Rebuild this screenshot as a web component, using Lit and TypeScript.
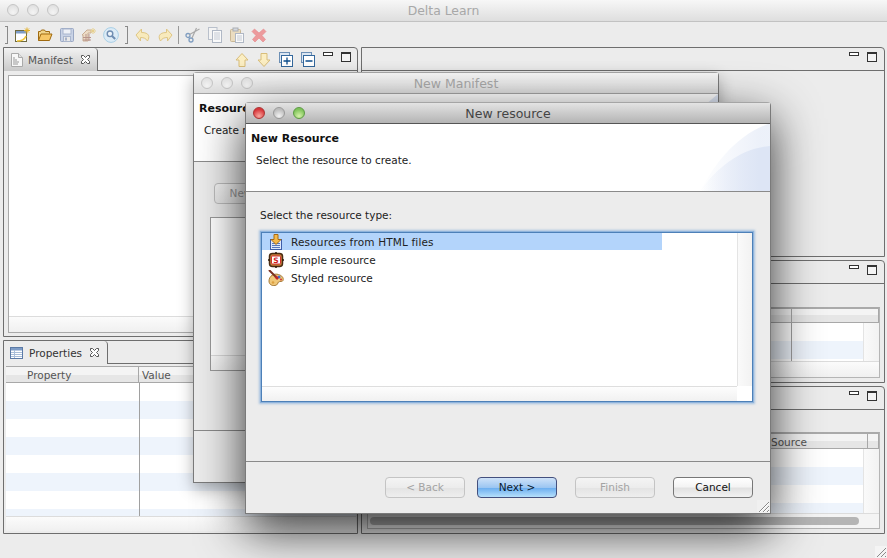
import { LitElement, html, css, svg } from "lit";
import { customElement } from "lit/decorators.js";

const viewBtns = html`<span class="vbtns"><i class="vmin"></i><i class="vmax"></i></span>`;

const ic = (body: unknown, cls = "") =>
  html`<svg class="ico ${cls}" width="16" height="16" viewBox="0 0 16 16">${body}</svg>`;

const closeX = html`<svg class="x" width="11" height="11" viewBox="0 0 11 11"><path d="M1.500 1.500h2L5.500 3.500l2-2h2v2l-2 2 2 2v2h-2l-2-2-2 2h-2v-2l2-2-2-2z" fill="#fff" stroke="#555"/></svg>`;

const tools = {
  fresh: svg`<rect x="0.500" y="3.500" width="11" height="11" fill="#fff" stroke="#6f6a3e"/><rect x="1" y="4" width="10" height="2.500" fill="#7d9cc7"/><path d="M2 14 Q9 14 11 9" stroke="#f0c53a" stroke-width="1.600" fill="none"/><path d="M12 0.500v6M9 3.500h6M10 1.500l4 4M14 1.500l-4 4" stroke="#e3b12c" stroke-width="1"/>`,
  open: svg`<path d="M1.500 13.500V4.500h2l1-1.500h3l1 1.500h4v2" fill="#f0d48a" stroke="#a06a10"/><path d="M1.500 13.500l2.500-6.500h11l-2.500 6.500z" fill="#f7c766" stroke="#a06a10"/>`,
  save: svg`<rect x="1.500" y="1.500" width="13" height="13" rx="1" fill="#c9d3e6" stroke="#9aa8c4"/><rect x="4" y="2" width="8" height="5" fill="#eef1f7" stroke="#aab6cd"/><rect x="4.500" y="9.500" width="7" height="5" fill="#e9e9e9" stroke="#aab6cd"/><rect x="6" y="10.500" width="2" height="3" fill="#a7b2c8"/>`,
  wiz: svg`<path d="M1 8l5-5h4v3l-3 0v8H2V8z" fill="#eddcc6" stroke="#c9ae94"/><path d="M2 10.500h8M5 7v7M8 7v7M2 13h8" stroke="#b9958b" fill="none"/><path d="M12 1v6M9 4h6M10.200 2.200l3.600 3.600M13.800 2.200l-3.600 3.600" stroke="#e7d08d"/>`,
  search: svg`<circle cx="8" cy="8" r="7.400" fill="#dcebf6" stroke="#a9cfe6"/><circle cx="7" cy="6.800" r="2.800" fill="#eef4fa" stroke="#6f8db2" stroke-width="1.400"/><path d="M9 9l3.200 3" stroke="#6f8db2" stroke-width="2"/>`,
  back: svg`<path d="M6.500 2L1 8l4.500 6V10.500C9 10.500 11 11.500 12.500 14C15 10 14.500 5.500 6.500 5.500z" fill="#f8eabc" stroke="#dfc684"/>`,
  fwd: svg`<path d="M9.500 2L15 8l-4.500 6V10.500C7 10.500 5 11.500 3.500 14C1 10 1.500 5.500 9.500 5.500z" fill="#f8eabc" stroke="#dfc684"/>`,
  cut: svg`<circle cx="3" cy="8.500" r="2" fill="none" stroke="#7f9dc0" stroke-width="1.300"/><circle cx="6" cy="13" r="2" fill="none" stroke="#7f9dc0" stroke-width="1.300"/><path d="M4.500 7.500L14.500 2M7 11L11.500 1" stroke="#a9a9a9" stroke-width="1.200"/>`,
  copy: svg`<rect x="1.500" y="0.500" width="8.500" height="12" fill="#f4f4f4" stroke="#b9c0cb"/><rect x="5.500" y="3.500" width="9" height="12" fill="#fafafa" stroke="#b0b8c5"/><path d="M7 6h6M7 8h6M7 10h6M7 12h6" stroke="#c4cad4"/>`,
  paste: svg`<rect x="1.500" y="2.500" width="10" height="12" rx="1" fill="#eadcc0" stroke="#c9b795"/><rect x="4" y="1" width="5" height="3" fill="#d4d8de" stroke="#a9adb4"/><rect x="6.500" y="6.500" width="8" height="9" fill="#fafafa" stroke="#b0b8c5"/><path d="M8 9h5M8 11h5M8 13h5" stroke="#c4cad4"/>`,
  del: svg`<path d="M3.500 2L8 6l4.500-4L15 4.500 11 8.500l3.500 4-2.500 2.500L8 11l-4 4-2.500-2.500L5 8.500 1 4.500z" fill="#ec9a9c" stroke="#e58689" stroke-width=".6"/>`,
};

@customElement("app-root")
export class AppRoot extends LitElement {
  static styles = css`
    :host { display: block; position: relative; width: 887px; height: 558px; overflow: hidden; background: #ececec; font-family: "DejaVu Sans", sans-serif; font-size: 10.5px; color: #222; }
    .main { display: flex; flex-direction: column; height: 558px; }
    .titlebar { height: 21px; flex: none; display: flex; align-items: center; justify-content: center; position: relative; background: linear-gradient(#f7f7f7, #dedede); border-bottom: 1px solid #c2c2c2; color: #a8a8a8; font-size: 12.4px; }
    .lights { position: absolute; left: 7px; top: 4px; display: flex; gap: 8px; }
    .light { width: 12px; height: 12px; border-radius: 50%; box-sizing: border-box; border: 1px solid #c5c5c5; background: radial-gradient(circle at 50% 75%, #f4f4f4, #dcdcdc); }
    .red { border-color: #a33; background: radial-gradient(circle at 50% 80%, #f8a9a0, #d8363a 70%); }
    .gray { border-color: #999; background: radial-gradient(circle at 50% 80%, #f3f3f3, #bdbdbd 70%); }
    .green { border-color: #5c9a43; background: radial-gradient(circle at 50% 80%, #d5f2a8, #7fc35a 70%); }
    .toolbar { height: 25px; flex: none; display: flex; align-items: center; padding-left: 5px; box-sizing: border-box; }
    .handle { flex: none; width: 3px; height: 18px; border: 1px solid #8a8a8a; border-left: 0; box-sizing: border-box; }
    .sep { flex: none; width: 1px; height: 18px; background: #999; margin: 0 6px 0 -1px; }
    .ico { flex: none; display: block; }
    .toolbar .ico { margin-right: 6px; }
    .toolbar .first { margin-left: 7px; }
    .toolbar .h2 { margin-right: 6px; }
    .work { flex: none; display: flex; gap: 3px; padding: 0 2px 0 3px; }
    .col { display: flex; flex-direction: column; gap: 3px; }
    .col.l { width: 355px; }
    .col.r { width: 524px; }
    .col.r .tabfill { padding-right: 7px; }
    .panel { box-sizing: border-box; border: 1px solid #6e6e6e; border-radius: 0 4px 0 0; display: flex; flex-direction: column; background: #ececec; overflow: hidden; }
    .phead { flex: none; height: 23px; display: flex; }
    .tab { box-sizing: border-box; height: 23px; display: flex; align-items: center; gap: 3px; padding: 0 5px; border-right: 1px solid #6e6e6e; border-radius: 0 4px 0 0; color: #333; }
    .tab .x { margin-left: 4px; flex: none; }
    .tab.inactive { background: linear-gradient(#f2f2f2, #c9c9c9); color: #555; }
    .tabfill { flex: 1; border-bottom: 1px solid #6e6e6e; display: flex; justify-content: flex-end; align-items: flex-start; gap: 8px; padding: 4px 6px 0 0; }
    .vbtns { display: flex; gap: 8px; }
    .vmin { display: block; width: 10px; height: 4px; box-sizing: border-box; border: 1px solid #333; background: #fff; }
    .vmax { display: block; width: 10px; height: 10px; box-sizing: border-box; border: 1px solid #333; border-top-width: 2px; background: #f4f4f4; }
    .vact { display: block; flex: none; }
    .pbody { flex: 1; display: flex; min-height: 0; }
    .pbody.m { padding: 4px 3px 3px 4px; }
    .pbody.p { padding: 2px 1px 2px 2px; }
    .pbody.s { padding: 23px 4px 4px 5px; }
    .box { flex: 1; display: flex; flex-direction: column; background: #fff; border: 1px solid #a9a9a9; min-width: 0; }
    .box .white { flex: 1; }
    .hstrip { flex: none; background: linear-gradient(#fbfbfb, #f0f0f0); border-top: 1px solid #dcdcdc; }
    .table { flex: 1; display: flex; flex-direction: column; min-width: 0; background: #fff; border: 1px solid #b5b5b5; border-top: 2px solid #aaa; }
    .thead { flex: none; height: 13px; display: flex; background: linear-gradient(#f4f4f4 50%, #e6e6e6 50%); border-bottom: 1px solid #a8a8a8; color: #555; line-height: 15px; }
    .thead.tall { height: 15px; line-height: 17px; }
    .thead.mid { height: 14px; line-height: 16px; }
    .th { box-sizing: border-box; border-right: 1px solid #a8a8a8; padding-left: 3px; }
    .row { flex: none; height: 18px; display: flex; }
    .row.alt { background: #eef4fc; }
    .rows { flex: 1; min-height: 0; overflow: hidden; position: relative; }
    .colline { position: absolute; top: 0; bottom: 0; width: 1px; background: #a0a0a0; }
    .window { position: absolute; box-sizing: border-box; display: flex; flex-direction: column; background: #ececec; border: 1px solid #7a7a7a; border-top-color: #a5a5a5; border-radius: 4px 4px 0 0; }
    .back { left: 193px; top: 72px; width: 526px; height: 411px; box-shadow: 0 6px 16px rgba(0, 0, 0, .3); }
    .front { left: 245px; top: 102px; width: 526px; height: 412px; box-shadow: 0 16px 48px rgba(0, 0, 0, .8); }
    .wtitle { flex: none; height: 20px; display: flex; align-items: center; justify-content: center; position: relative; font-size: 12.5px; }
    .back .wtitle { background: linear-gradient(#f5f5f5, #dedede); color: #a8a8a8; border-bottom: 1px solid #a5a5a5; }
    .front .wtitle { background: linear-gradient(#e3e3e3, #b4b4b4); color: #444; border-bottom: 1px solid #555; }
    .wtitle .lights { left: 7px; top: 4px; }
    .banner { flex: none; height: 67px; background: #fff; border-bottom: 1px solid #8a8a8a; position: relative; overflow: hidden; }
    .banner svg { position: absolute; right: 0; top: 0; }
    .banner h1 { margin: 0; font-size: 11px; font-weight: bold; color: #111; padding: 7px 0 0 5px; line-height: 15px; }
    .banner p { margin: 0; padding: 7px 0 0 10px; line-height: 15px; color: #222; }
    .wbody { flex: 1; min-height: 0; display: flex; flex-direction: column; }
    .front .wbody { padding: 16px 17px 0 15px; }
    .lbl { line-height: 15px; height: 15px; margin: 0 0 9px -1px; }
    .list { height: 170px; box-sizing: border-box; background: #fff; border: 1px solid #4d80b8; box-shadow: 0 0 0 1px #8fb4dc, 0 0 2px 2px rgba(120, 165, 215, .6); display: grid; grid-template-columns: 1fr 15px; grid-template-rows: 1fr 15px; }
    .items { min-width: 0; }
    .item { height: 18px; width: 400px; display: flex; align-items: center; gap: 7px; padding-left: 6px; box-sizing: border-box; color: #222; }
    .item.sel { background: #b3d4fb; height: 17px; margin-bottom: 1px; letter-spacing: .16px; }
    .s-mark { font: bold 7.500px "DejaVu Sans", sans-serif; fill: #d01818; }
    .vstrip { background: linear-gradient(90deg, #fafafa, #f2f2f2); border-left: 1px solid #e4e4e4; }
    .lstrip { background: linear-gradient(#fdfdfd, #f1f1f1); border-top: 1px solid #dedede; }
    .footer { flex: none; height: 52px; box-sizing: border-box; border-top: 1px solid #8a8a8a; display: flex; align-items: flex-start; padding: 15px 17px 0 0; justify-content: flex-end; gap: 18px; }
    .btn { box-sizing: border-box; width: 80px; height: 21px; border-radius: 4px; border: 1px solid #777; background: linear-gradient(#fff, #f4f4f4 45%, #e2e2e2 55%, #f2f2f2); text-align: center; line-height: 19px; color: #111; }
    .btn.dis { color: #a3a3a3; border-color: #c4c4c4; background: linear-gradient(#f4f4f4, #ececec 50%, #e4e4e4 55%, #eee); }
    .btn.def { border-color: #44507e; background: linear-gradient(#cfe2f8, #9cc6f2 50%, #6fb0f0 55%, #b6e0fb); color: #0a1a30; }
    .btn.tight { margin-right: -6px; }
    .grip { position: absolute; right: 0; bottom: 0; width: 13px; height: 13px; background: #f0f0f0; }
    .grip svg, .mgrip svg { display: block; }
    .mgrip { position: absolute; right: 0; bottom: 0; width: 12px; height: 12px; background: #f4f4f4; }
    .backbtn { width: 54px; height: 21px; margin: 21px 0 0 20px; box-sizing: border-box; border: 1px solid #bdbdbd; border-radius: 4px; background: linear-gradient(#f4f4f4, #e6e6e6); color: #999; line-height: 19px; text-align: center; flex: none; }
    .backbox { margin: 13px 0 0 16px; width: 400px; height: 154px; box-sizing: border-box; border: 1px solid #999; background: #fff; display: flex; flex-direction: column; flex: none; }
    .backbody { flex: 1; min-height: 0; }
  `;

  private stripes(n: number) {
    return Array.from({ length: n }, (_, i) => html`<div class="row ${i % 2 ? "alt" : ""}"></div>`);
  }

  render() {
    return html`
      <div class="main">
        <div class="titlebar">
          <div class="lights"><i class="light"></i><i class="light"></i><i class="light"></i></div>
          Delta Learn
        </div>
        <div class="toolbar">
          <i class="handle"></i>
          ${ic(tools.fresh, "first")}${ic(tools.open)}${ic(tools.save)}${ic(tools.wiz)}${ic(tools.search, "h2")}
          <i class="handle"></i>
          ${ic(tools.back, "first")}${ic(tools.fwd)}
          <i class="sep"></i>
          ${ic(tools.cut)}${ic(tools.copy)}${ic(tools.paste)}${ic(tools.del)}
        </div>
        <div class="work">
          <div class="col l">
            <div class="panel" style="height:290px">
              <div class="phead">
                <div class="tab inactive" style="width:94px">
                  <svg class="ico" width="16" height="16" viewBox="0 0 16 16"><path d="M2.500 1.500h7l4 4v9h-11z" fill="#f7f7f7" stroke="#aaa"/><path d="M9.500 1.500v4h4" fill="#e2e2e2" stroke="#aaa"/><path d="M4 6h2M4 8h4M4 10h6M4 12h5" stroke="#999"/></svg>
                  Manifest
                  ${closeX}
                </div>
                <div class="tabfill">
                  <svg class="vact" width="14" height="16" viewBox="0 0 14 16"><path d="M7 1.500l6 6.500H10v6.500H4V8H1z" fill="#fbeec3" stroke="#d8bd7a"/></svg>
                  <svg class="vact" width="14" height="16" viewBox="0 0 14 16"><path d="M7 14.500l6-6.500H10V1.500H4V8H1z" fill="#fbeec3" stroke="#d8bd7a"/></svg>
                  <svg class="vact" width="14" height="15" viewBox="0 0 14 15"><rect x=".5" y=".5" width="10" height="10" fill="#dbe6f2" stroke="#6c8fb5"/><rect x="2.500" y="3.500" width="11" height="11" fill="#fff" stroke="#34689c"/><path d="M4.500 9h7M8 5.500v7" stroke="#0d4d8c" stroke-width="1.300"/></svg>
                  <svg class="vact" width="14" height="15" viewBox="0 0 14 15"><rect x=".5" y=".5" width="10" height="10" fill="#dbe6f2" stroke="#6c8fb5"/><rect x="2.500" y="3.500" width="11" height="11" fill="#fff" stroke="#34689c"/><path d="M4.500 9h7" stroke="#0d4d8c" stroke-width="1.300"/></svg>
                  ${viewBtns}
                </div>
              </div>
              <div class="pbody m">
                <div class="box"><div class="white"></div><div class="hstrip" style="height:15px"></div></div>
              </div>
            </div>
            <div class="panel" style="height:194px">
              <div class="phead">
                <div class="tab" style="width:104px">
                  <svg class="ico" width="14" height="14" viewBox="0 0 14 14" style="margin:0 2px 0 1px"><rect x=".5" y="1.500" width="12" height="11" fill="#fff" stroke="#5b7aa6"/><rect x="1" y="2" width="11" height="2.500" fill="#7d9cc7"/><path d="M1 6.500h11M1 8.500h11M1 10.500h11M4.500 4v8" stroke="#a9bed9"/></svg>
                  Properties
                  ${closeX}
                </div>
                <div class="tabfill"></div>
              </div>
              <div class="pbody p">
                <div class="table" style="border:0;border-top:1px solid #aaa">
                  <div class="thead tall"><div class="th" style="width:133px;padding-left:21px">Property</div><div class="th" style="flex:1;border:0">Value</div></div>
                  <div class="rows">${this.stripes(8)}<i class="colline" style="left:133px"></i></div>
                  <div class="hstrip" style="height:14px"></div>
                </div>
              </div>
            </div>
          </div>
          <div class="col r">
            <div class="panel" style="height:210px">
              <div class="phead"><div class="tabfill">${viewBtns}</div></div>
            </div>
            <div class="panel" style="height:123px">
              <div class="phead"><div class="tabfill">${viewBtns}</div></div>
              <div class="pbody s">
                <div class="table">
                  <div class="thead"><div class="th" style="width:424px"></div><div class="th" style="flex:1"></div></div>
                  <div style="flex:1;display:flex;min-height:0">
                    <div class="rows">${this.stripes(2)}<i class="colline" style="left:423px"></i></div>
                    <div class="vstrip" style="width:15px"></div>
                  </div>
                  <div class="hstrip" style="height:15px"></div>
                </div>
              </div>
            </div>
            <div class="panel" style="height:148px">
              <div class="phead"><div class="tabfill">${viewBtns}</div></div>
              <div class="pbody s" style="padding-top:22px">
                <div class="table">
                  <div class="thead mid"><div class="th" style="width:400px;border:0"></div><div class="th" style="width:100px">Source</div><div class="th" style="flex:1"></div></div>
                  <div style="flex:1;display:flex;min-height:0">
                    <div class="rows">${this.stripes(4)}</div>
                    <div class="vstrip" style="width:15px"></div>
                  </div>
                  <div class="hstrip" style="height:15px;padding:3px 20px 0 2px;box-sizing:border-box;background:#f4f4f4"><div style="height:8px;border-radius:4px;background:#b5b5b5"></div></div>
                </div>
              </div>
            </div>
          </div>
        </div>
      </div>
      <div class="mgrip"><svg width="12" height="12" viewBox="0 0 12 12"><path d="M2 11L11 2M6 11l5-5M10 11l1-1" stroke="#8a8a8a" fill="none"/></svg></div>

      <div class="window back">
        <div class="wtitle">
          <div class="lights"><i class="light"></i><i class="light"></i><i class="light"></i></div>
          <span>New Manifest</span>
        </div>
        <div class="banner">
          <svg width="72" height="67" viewBox="0 0 72 67"><path d="M2 67C20 42 44 24 72 0V67Z" fill="#dfe7f6"/></svg>
          <h1>Resource</h1>
          <p>Create resource</p>
        </div>
        <div class="wbody backbody">
          <div class="backbtn">New</div>
          <div class="backbox"><div style="flex:1"></div><div class="hstrip" style="height:14px"></div></div>
        </div>
        <div class="footer"></div>
      </div>

      <div class="window front">
        <div class="wtitle">
          <div class="lights"><i class="light red"></i><i class="light gray"></i><i class="light green"></i></div>
          <span>New resource</span>
        </div>
        <div class="banner">
          <svg width="72" height="67" viewBox="0 0 72 67">
            <defs><linearGradient id="fade" x1="0" x2="1"><stop offset="0" stop-color="#dde5f5" stop-opacity="0"/><stop offset=".85" stop-color="#dde5f5"/></linearGradient></defs>
            <path d="M2 67C18 38 38 12 70 0H72V67Z" fill="url(#fade)" opacity=".55"/>
            <path d="M2 67C20 42 44 24 72 22V67Z" fill="url(#fade)"/>
          </svg>
          <h1>New Resource</h1><p>Select the resource to create.</p>
        </div>
        <div class="wbody">
          <div class="lbl">Select the resource type:</div>
          <div class="list">
            <div class="items">
              <div class="item sel">
                <svg class="ico" width="16" height="16" viewBox="0 0 16 16"><rect x="2.500" y="5.500" width="11" height="10" fill="#dfe9fb" stroke="#3e5ea8"/><path d="M4 9.500h8M4 11.500h8M4 13.500h8" stroke="#5778bd"/><path d="M6 0.500h4v5h3l-5 5-5-5h3z" fill="#f5b94a" stroke="#a86a10"/></svg>
                Resources from HTML files
              </div>
              <div class="item">
                <svg class="ico" width="16" height="16" viewBox="0 0 16 16"><rect x="1.500" y="1.500" width="13" height="13" rx="3" fill="#c9803a" stroke="#4a2c12" stroke-width="1.500"/><path d="M8 0v2M8 14v2M0 8h2M14 8h2" stroke="#2e1a08" stroke-width="1.500"/><rect x="3.500" y="4" width="9" height="8" rx="1" fill="#fff" stroke="#d23030"/><text class="s-mark" x="8" y="10.800" text-anchor="middle">S</text></svg>
                Simple resource
              </div>
              <div class="item">
                <svg class="ico" width="16" height="16" viewBox="0 0 16 16"><path d="M1 11C1 6 6 3 10.500 4.500C14 5.500 16 8 15 10.500C14.500 12 12 11 10.500 12C9.500 13 10 15 7 15.500C4 16 1 14.500 1 11z" fill="#f0c778" stroke="#a77c3b"/><circle cx="11" cy="7" r="1.500" fill="#3c6fd0"/><circle cx="13" cy="9.500" r="1.100" fill="#d04040"/><circle cx="5" cy="12.500" r="1.300" fill="#dca040"/><path d="M1 0l8 8" stroke="#7a3020" stroke-width="2"/><path d="M7.500 6.500l2.500 2.500" stroke="#c02828" stroke-width="2.500"/></svg>
                Styled resource
              </div>
            </div>
            <div class="vstrip"></div>
            <div class="lstrip"></div>
            <div></div>
          </div>
        </div>
        <div class="footer">
          <div class="btn dis tight">&lt; Back</div>
          <div class="btn def">Next &gt;</div>
          <div class="btn dis">Finish</div>
          <div class="btn">Cancel</div>
        </div>
        <div class="grip"><svg width="13" height="13" viewBox="0 0 13 13"><path d="M2 12L12 2M6 12l6-6M10 12l2-2" stroke="#8a8a8a" fill="none"/><path d="M3 12L12 3M7 12l5-5M11 12l1-1" stroke="#fff" fill="none"/></svg></div>
      </div>
    `;
  }
}
